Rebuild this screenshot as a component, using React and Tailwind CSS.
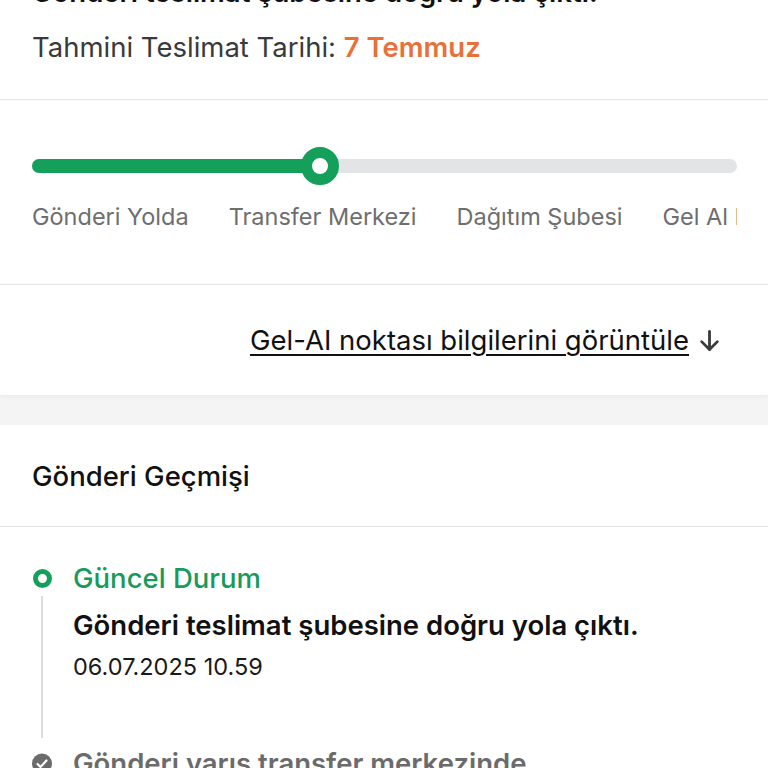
import React from 'react';

const steps = ['Gönderi Yolda', 'Transfer Merkezi', 'Dağıtım Şubesi', 'Gel Al Noktası'];

function ArrowDown() {
  return (
    <svg width="27" height="27" viewBox="0 0 24 24" fill="none" stroke="#3a3a3a" strokeWidth="2.5" strokeLinecap="round" strokeLinejoin="round">
      <path d="M12 4v16" />
      <path d="M5 13l7 7 7-7" />
    </svg>
  );
}

function CheckDot() {
  return (
    <svg width="21" height="21" viewBox="0 0 20 20">
      <circle cx="10" cy="10" r="10" fill="#6b6b6b" />
      <path d="M5.5 10.5l3 3 6-6.5" fill="none" stroke="#fff" strokeWidth="2.2" strokeLinecap="round" strokeLinejoin="round" />
    </svg>
  );
}

export default function App() {
  return (
    <div className="w-[768px] h-[768px] overflow-hidden bg-[#f4f4f4] font-['Inter',sans-serif]">
      {/* Shipment summary */}
      <section className="bg-white shadow-[0_2px_4px_rgba(0,0,0,0.04)]">
        <div className="px-8 -mt-[25px]">
          <h2 className="text-[27.5px] leading-[34px] font-semibold text-[#111] whitespace-nowrap">
            Gönderi teslimat şubesine doğru yola çıktı.
          </h2>
          <p className="mt-[21px] text-[27.5px] leading-[34px] text-[#3a3a3a]">
            Tahmini Teslimat Tarihi: <span className="font-semibold text-[#e8703a]">7 Temmuz</span>
          </p>
        </div>
        <div className="mt-[35px] border-t border-[#e6e6e6]" />

        {/* Progress */}
        <div className="pl-8 pr-[31px] pt-[47px] pb-[52px]">
          <div className="overflow-hidden">
            <div className="relative h-[38px] flex items-center">
              <div className="w-full h-[14px] rounded-full bg-[#e3e4e6]" />
              <div className="absolute left-0 top-[12px] h-[14px] w-[290px] rounded-full bg-[#14a05a]" />
              <div className="absolute left-[269px] top-0 w-[38px] h-[38px] rounded-full border-[11px] border-[#14a05a] bg-white" />
            </div>
            <div className="mt-[17px] flex gap-[40px] whitespace-nowrap text-[23.5px] leading-[30px] text-[#6e6e6e]">
              {steps.map((s) => (
                <span key={s}>{s}</span>
              ))}
            </div>
          </div>
        </div>
        <div className="border-t border-[#e6e6e6]" />

        {/* Pickup point link */}
        <div className="h-[110px] px-[45px] flex items-center justify-end gap-[7px]">
          <span className="text-[27.5px] leading-[34px] text-[#111] underline underline-offset-[4px] decoration-[1.5px]">
            Gel-AI noktası bilgilerini görüntüle
          </span>
          <ArrowDown />
        </div>
      </section>

      {/* History */}
      <section className="mt-[30px] bg-white">
        <div className="h-[102px] px-8 flex items-center border-b border-[#e4e4e4]">
          <h3 className="text-[27.5px] leading-[34px] font-medium text-[#111]">Gönderi Geçmişi</h3>
        </div>

        <div className="px-8 pt-[34px]">
          <div className="flex gap-[21px]">
            <div className="flex flex-col items-center w-[20px]">
              <div className="mt-[8px] w-[19px] h-[19px] rounded-full border-[5.5px] border-[#14a05a]" />
              <div className="mt-[8px] w-[2px] h-[142px] bg-[#dcdcdc]" />
            </div>
            <div>
              <div className="text-[27.5px] leading-[34px] font-medium text-[#179a5a]">Güncel Durum</div>
              <div className="mt-[13px] text-[27.5px] leading-[34px] font-semibold text-[#111] whitespace-nowrap">
                Gönderi teslimat şubesine doğru yola çıktı.
              </div>
              <div className="mt-[10px] text-[23.5px] leading-[30px] text-[#1a1a1a]">06.07.2025 10.59</div>
            </div>
          </div>

          <div className="mt-[8px] flex gap-[21px] items-center">
            <div className="w-[20px] flex justify-center">
              <CheckDot />
            </div>
            <div className="text-[27.5px] leading-[34px] font-semibold text-[#6b6b6b]">
              Gönderi varış transfer merkezinde
            </div>
          </div>
        </div>
      </section>
    </div>
  );
}
